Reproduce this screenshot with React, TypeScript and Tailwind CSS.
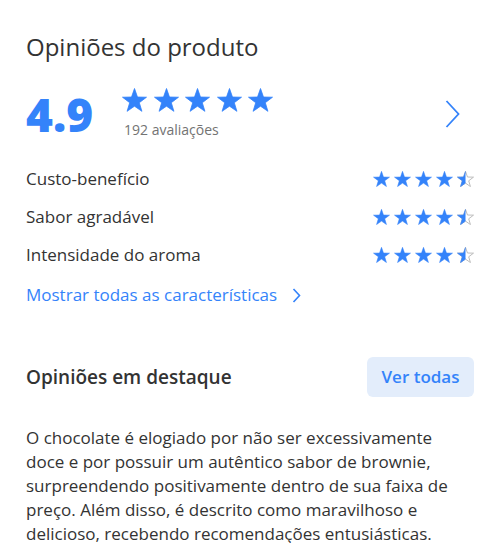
import React from 'react'

const STAR = 'M12 0L14.97 8.53L24 8.72L16.8 14.18L19.42 22.83L12 17.67L4.58 22.83L7.2 14.18L0 8.72L9.03 8.53Z'

const Star = ({ className, half = false }: { className: string; half?: boolean }) => {
    if (!half) {
        return (
            <svg viewBox="-0.5 -0.5 25 24" className={className}>
                <path d={STAR} fill="#3483fa" stroke="#3483fa" strokeWidth="0.8" strokeLinejoin="round" />
            </svg>
        )
    }
    return (
        <svg viewBox="-0.5 -0.5 25 24" className={className}>
            <defs>
                <clipPath id="left-half">
                    <rect x="-1" y="-1" width="13" height="26" />
                </clipPath>
            </defs>
            <path d={STAR} fill="none" stroke="#b8b8b8" strokeWidth="1.4" strokeLinejoin="round" />
            <path d={STAR} fill="#3483fa" stroke="#3483fa" strokeWidth="0.8" strokeLinejoin="round" clipPath="url(#left-half)" />
        </svg>
    )
}

const Feature = ({ label }: { label: string }) => (
    <div className="flex h-[38px] items-center justify-between">
        <span className="text-[17px] text-[#333]">{label}</span>
        <div className="flex gap-[4px]">
            <Star className="h-[16px] w-[17px]" />
            <Star className="h-[16px] w-[17px]" />
            <Star className="h-[16px] w-[17px]" />
            <Star className="h-[16px] w-[17px]" />
            <Star className="h-[16px] w-[17px]" half />
        </div>
    </div>
)

export default function App() {
    return (
        <div className="min-h-screen bg-white px-[26px] pt-[33px] font-['Open_Sans',sans-serif]">

            {/* Header */}
            <h1 className="text-[24px] leading-[28px] font-normal text-[#333]">Opiniões do produto</h1>

            {/* Average rating */}
            <div className="mt-[27px] flex items-center">
                <span className="w-[71px] text-[46px] font-extrabold leading-none text-[#3483fa]">4.9</span>
                <div className="ml-[25px] flex flex-col">
                    <div className="flex gap-[6.5px]">
                        <Star className="h-[24px] w-[25px]" />
                        <Star className="h-[24px] w-[25px]" />
                        <Star className="h-[24px] w-[25px]" />
                        <Star className="h-[24px] w-[25px]" />
                        <Star className="h-[24px] w-[25px]" />
                    </div>
                    <span className="mt-[9px] ml-[2px] text-[14px] leading-[18px] text-[#737373]">192 avaliações</span>
                </div>
                <svg viewBox="0 0 15 28" className="ml-auto mr-[14px] h-[28px] w-[15px]">
                    <polyline points="1.5,1 13.5,14 1.5,27" fill="none" stroke="#3483fa" strokeWidth="1.8" />
                </svg>
            </div>

            {/* Features */}
            <div className="mt-[21px] flex flex-col">
                <Feature label="Custo-benefício" />
                <Feature label="Sabor agradável" />
                <Feature label="Intensidade do aroma" />
            </div>

            <div className="mt-[2px] flex h-[38px] items-center gap-[15px] text-[17px] text-[#3483fa]">
                <span>Mostrar todas as características</span>
                <svg viewBox="0 0 9 15" className="h-[15px] w-[9px]">
                    <polyline points="1.5,1 7.5,7.5 1.5,14" fill="none" stroke="#3483fa" strokeWidth="1.6" />
                </svg>
            </div>

            {/* Highlighted reviews */}
            <div className="mt-[43px] flex items-center justify-between">
                <h2 className="text-[19px] font-semibold text-[#333]">Opiniões em destaque</h2>
                <button className="h-[40px] w-[107px] rounded-[6px] bg-[#e3edfb] text-[17px] font-semibold text-[#3483fa]">
                    Ver todas
                </button>
            </div>

            <p className="mt-[29px] text-[17px] leading-[24px] text-[#333]">
                O chocolate é elogiado por não ser excessivamente doce e por possuir um autêntico sabor de brownie, surpreendendo positivamente dentro de sua faixa de preço. Além disso, é descrito como maravilhoso e delicioso, recebendo recomendações entusiásticas.
            </p>
        </div>
    )
}
